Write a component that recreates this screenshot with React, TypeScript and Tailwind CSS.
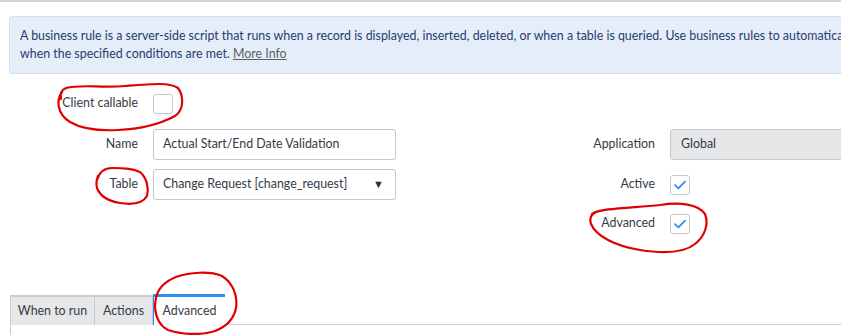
import React from "react";

const font = { fontFamily: "Lato, 'Open Sans', sans-serif" };

function Check({ checked }: { checked: boolean }) {
  return (
    <div className="w-[20px] h-[20px] shrink-0 rounded-[3px] border border-[#c6c8cc] bg-white flex items-center justify-center">
      {checked && (
        <svg width="14" height="12" viewBox="0 0 14 12">
          <path d="M2 6.2 L5.4 9.4 L12 2.6" fill="none" stroke="#2f8cf5" strokeWidth="1.8" strokeLinecap="round" strokeLinejoin="round" />
        </svg>
      )}
    </div>
  );
}

export default function App() {
  return (
    <div className="relative w-[841px] h-[335px] overflow-hidden bg-white text-[12.4px] text-[#343a45]" style={font}>
      <div className="h-[2px] bg-[#cfd1d4]" />
      <div className="mt-[14px] ml-[9px] w-[900px] h-[58px] border border-[#cddff2] bg-[#e5eef8] rounded-[3px] px-[10px] pt-[10px] leading-[18px] text-[#253b72] whitespace-nowrap overflow-hidden">
        <div>
          A business rule is a server-side script that runs when a record is displayed, inserted, deleted, or when a table is queried. Use business rules to automatically change values in form fields
        </div>
        <div>
          when the specified conditions are met. <span className="underline text-[#5b5f66]">More Info</span>
        </div>
      </div>

      <div className="mt-[14px] flex h-[31px] items-center">
        <div className="w-[138px] shrink-0 text-right">Client callable</div>
        <div className="ml-[15px] shrink-0">
          <Check checked={false} />
        </div>
      </div>

      <div className="mt-[10px] flex h-[31px] items-center">
        <div className="w-[138px] shrink-0 text-right">Name</div>
        <div className="ml-[15px] shrink-0 w-[243px] h-[31px] border border-[#c6c8cc] rounded-[3px] px-[9px] flex items-center">
          Actual Start/End Date Validation
        </div>
        <div className="w-[259px] shrink-0 text-right">Application</div>
        <div className="ml-[15px] shrink-0 w-[200px] h-[31px] border border-[#c6c8cc] rounded-[3px] bg-[#e6e7e9] px-[10px] flex items-center">
          Global
        </div>
      </div>

      <div className="mt-[9px] flex h-[31px] items-center">
        <div className="w-[138px] shrink-0 text-right">Table</div>
        <div className="ml-[15px] shrink-0 w-[243px] h-[31px] border border-[#c6c8cc] rounded-[3px] pl-[9px] pr-[11px] flex items-center justify-between">
          <span>Change Request [change_request]</span>
          <span className="text-[11px] text-[#2b2f36]">▼</span>
        </div>
        <div className="w-[259px] shrink-0 text-right">Active</div>
        <div className="ml-[15px] shrink-0">
          <Check checked={true} />
        </div>
      </div>

      <div className="mt-[8px] flex h-[31px] items-center">
        <div className="w-[396px] shrink-0" />
        <div className="w-[259px] shrink-0 text-right">Advanced</div>
        <div className="ml-[15px] shrink-0">
          <Check checked={true} />
        </div>
      </div>

      <div className="mt-[55px] ml-[10px] flex items-end">
        <div className="w-[85px] shrink-0 h-[30px] bg-[#e6e7e9] border-t-2 border-l border-r border-[#c9cbcf] flex items-center justify-center">When to run</div>
        <div className="w-[58px] shrink-0 h-[30px] bg-[#e6e7e9] border-t-2 border-r border-[#c9cbcf] flex items-center justify-center">Actions</div>
        <div className="w-[72px] shrink-0 h-[31px] bg-white border-t-[3px] border-t-[#2f8cf5] border-l border-l-[#2f8cf5] flex items-center justify-center">Advanced</div>
        <div className="flex-1 border-b border-[#c9cbcf]" />
      </div>
      <div className="ml-[10px] h-[12px] border-l border-[#c9cbcf]" />

      <svg className="absolute left-0 top-0 pointer-events-none" width="841" height="335" viewBox="0 0 841 335" fill="none" stroke="#e10000" strokeWidth="2.2" strokeLinecap="round" strokeLinejoin="round">
        <path d="M62 92 C56 100 57 114 70 122 C82 129 100 131 118 130 C140 129 160 124 175 116 C184 110 184 96 178 88 C170 82 150 84 125 86 C100 88 80 84 66 88 C61 90 60 94 61 99" />
        <path d="M97 180 C99 173 104 168 112 168 C122 168 132 168 140 172 C147 178 149 188 147 196 C143 203 133 205 120 203 C108 201 100 196 97 188 C96 184 96 181 98 176" />
        <path d="M592 214 C600 208 630 208 660 205 C680 202 698 204 705 214 C709 224 705 236 695 244 C685 252 665 254 640 250 C615 246 596 236 591 224 C589 218 592 214 596 212" />
        <path d="M156 298 C158 288 166 281 176 277 C190 272 210 271 222 276 C233 283 238 296 236 308 C234 318 228 326 215 331 C200 336 180 334 168 330 C160 326 156 318 155 308 C155 302 156 296 158 292" />
      </svg>
    </div>
  );
}
